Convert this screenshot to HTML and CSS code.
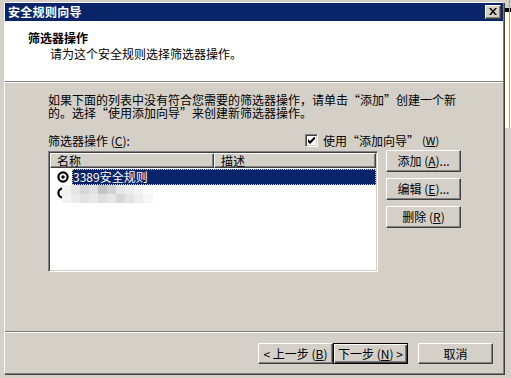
FILE: index.html
```html
<!DOCTYPE html>
<html lang="zh-CN">
  <head>
    <meta charset="UTF-8" />
    <title>安全规则向导</title>
    <link rel="stylesheet" href="styles.css">
  </head>
  <body>
    <div class="screen">
      <div class="window">
        <div class="titlebar">
          <span class="title">安全规则向导</span>
          <span class="close">
            <svg width="8" height="7" viewBox="0 0 8 7"><path d="M0 0h2l2 2.5L6 0h2L5 3.5 8 7H6L4 4.5 2 7H0l3-3.5z" fill="#000"/></svg>
          </span>
        </div>

        <div class="header">
          <div class="h-title">筛选器操作</div>
          <div class="h-sub">请为这个安全规则选择筛选器操作。</div>
        </div>

        <div class="content">
          <p class="intro">如果下面的列表中没有符合您需要的筛选器操作，请单击“添加”创建一个新<br>的。选择“使用添加向导”来创建新筛选器操作。</p>

          <div class="label-row">
            <span class="label">筛选器操作 (<u>C</u>):</span>
            <span class="check">
              <span class="box">
                <svg width="7" height="7" viewBox="0 0 7 7"><path d="M0 2v3l2 2 5-5V-1L2 4z" fill="#000"/></svg>
              </span>
              使用“添加向导”<span class="key">(<u>W</u>)</span>
            </span>
          </div>

          <div class="main">
            <div class="list">
              <div class="cols">
                <div class="col c1">名称</div>
                <div class="col c2">描述</div>
              </div>
              <div class="rows">
                <div class="row">
                  <svg class="radio" width="12" height="12" viewBox="0 0 12 12"><circle cx="6" cy="6" r="4.6" fill="#fff" stroke="#000" stroke-width="2.2"/><circle cx="6" cy="6" r="1.8" fill="#000"/></svg>
                  <span class="name sel">3389安全规则</span>
                </div>
                <div class="row">
                  <svg class="radio" width="12" height="12" viewBox="0 0 12 12"><circle cx="6" cy="6" r="4.6" fill="#fff" stroke="#000" stroke-width="2.2"/></svg>
                  <span class="blur"><span class="b1"></span><span class="b2"></span></span>
                </div>
              </div>
            </div>

            <div class="side">
              <div class="btn">添加 (<u>A</u>)...</div>
              <div class="btn">编辑 (<u>E</u>)...</div>
              <div class="btn">删除 (<u>R</u>)</div>
            </div>
          </div>
        </div>

        <div class="footer">
          <div class="btn wide">&lt; 上一步 (<u>B</u>)</div>
          <div class="btn wide default">下一步 (<u>N</u>) &gt;</div>
          <div class="btn wide cancel">取消</div>
        </div>
      </div>
      <div class="other"></div>
    </div>
  </body>
</html>
```

FILE: styles.css
```css
* { box-sizing: border-box; }
html, body { margin: 0; padding: 0; }
body { background: #d4d0c8; font-family: "Noto Sans CJK SC", "DejaVu Sans", sans-serif; font-size: 12px; color: #000; width: 511px; height: 378px; overflow: hidden; }

.screen { display: flex; }
.window { margin: 2px 0 0 4px; width: 500px; height: 372px; border-top: 1px solid #fff; border-left: 1px solid #fff; border-right: 1px solid #808080; border-bottom: 1px solid #808080; box-shadow: 1px 1px 0 #404040; display: flex; flex-direction: column; }
.other { margin-left: 1px; width: 6px; height: 378px; background: linear-gradient(180deg, #d4d0c8 0 8px, #000 8px 12px, #fffbe8 12px 128px, #d4d0c8 128px); }
.other::after { content: ""; display: block; margin-left: 4px; width: 1px; height: 128px; background: #a0a0a0; }

/* title bar */
.titlebar { height: 18px; background: #0a246a; display: flex; align-items: center; justify-content: space-between; padding: 0 2px 0 3px; }
.title { color: #fff; font-weight: bold; font-size: 12px; line-height: 14px; letter-spacing: 0.3px; }
.close { width: 16px; height: 14px; background: #d4d0c8; border: 1px solid; border-color: #fff #404040 #404040 #fff; box-shadow: inset -1px -1px #808080; display: flex; align-items: center; justify-content: center; }

/* white header */
.header { height: 61px; background: #fff; padding: 10px 0 0 23px; border-bottom: 1px solid #808080; box-shadow: 0 1px 0 #fff; }
.h-title { font-weight: bold; line-height: 14px; }
.h-sub { margin: 2px 0 0 22px; line-height: 14px; }

/* body */
.content { height: 249px; margin-top: 1px; padding: 10px 0 0 43px; }
.intro { margin: 0; line-height: 13px; white-space: nowrap; }
.label-row { display: flex; align-items: center; height: 13px; margin-top: 15px; white-space: nowrap; line-height: 13px; }
.label { width: 257px; }
.check { display: flex; align-items: center; }
.box { width: 13px; height: 13px; background: #fff; border: 1px solid; border-color: #808080 #fff #fff #808080; box-shadow: inset 1px 1px #404040, inset -1px -1px #d4d0c8; display: flex; align-items: center; justify-content: center; margin-right: 5px; }
.key { margin-left: 3px; font-size: 11px; }

.main { display: flex; margin-top: 4px; }
.list { width: 330px; height: 121px; background: #fff; border: 1px solid; border-color: #808080 #fff #fff #808080; box-shadow: inset 1px 1px #404040, inset -1px -1px #d4d0c8; padding: 1px; }
.cols { display: flex; height: 15px; }
.col { background: #d4d0c8; border: 1px solid; border-color: #fff #404040 #404040 #fff; box-shadow: inset -1px -1px #808080; line-height: 13px; padding-left: 6px; }
.c1 { width: 164px; }
.c2 { flex: 1; }
.rows { padding-top: 1px; }
.row { display: flex; align-items: center; height: 16px; padding-left: 7px; }
.radio { flex: none; margin-right: 3px; }
.name { flex: 1; height: 16px; line-height: 16px; padding-left: 1px; }
.sel { background: #0a246a; color: #fff; outline: 1px dotted #e6cf7a; outline-offset: -1px; }
.blur { display: flex; flex-direction: column; margin: 3px 0 0 -10px; width: 91px; }
.b1 { height: 9px; background: linear-gradient(90deg, #f2f2f2 0 9px, #e4e4e4 9px 18px, #d6d6d6 18px 27px, #e0e0e0 27px 36px, #c4c4c4 36px 45px, #d2d2d2 45px 54px, #e6e6e6 54px 63px, #ececec 63px 72px, #f4f4f4 72px 81px, #fbfbfb 81px); }
.b2 { height: 9px; background: linear-gradient(90deg, #f4f4f4 0 9px, #ececec 9px 18px, #e2e2e2 18px 27px, #e8e8e8 27px 36px, #dedede 36px 45px, #e6e6e6 45px 54px, #d8d8d8 54px 63px, #e4e4e4 63px 72px, #eeeeee 72px 81px, #f6f6f6 81px); }

.side { margin: -1px 0 0 8px; display: flex; flex-direction: column; gap: 6px; }
.btn { width: 75px; height: 22px; background: #d4d0c8; border: 1px solid; border-color: #fff #404040 #404040 #fff; box-shadow: inset -1px -1px #808080; display: flex; align-items: center; justify-content: center; white-space: nowrap; line-height: 14px; }
.btn u { text-underline-offset: 1px; }

/* footer */
.footer { height: 42px; border-top: 1px solid #808080; box-shadow: inset 0 1px #fff; display: flex; justify-content: flex-end; padding: 11px 10px 0 0; }
.wide { height: 21px; }
.default { border: 1px solid #000; box-shadow: inset 1px 1px #fff, inset -1px -1px #404040, inset -2px -2px #808080; }
.cancel { margin-left: 10px; }
```
